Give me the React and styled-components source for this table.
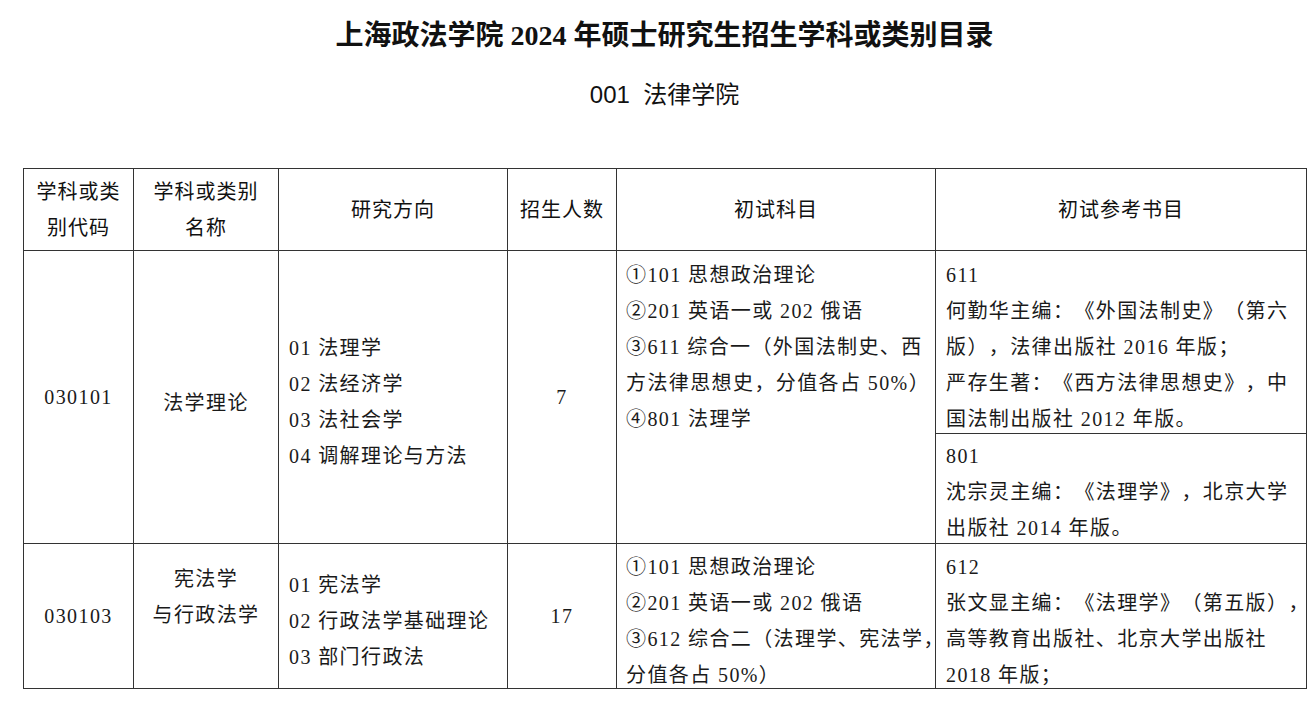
import React from 'react';
import styled, { createGlobalStyle } from 'styled-components';

const GlobalStyle = createGlobalStyle`
  html, body {
    margin: 0;
    padding: 0;
    background: #ffffff;
  }
  body {
    font-family: "Liberation Serif", "Noto Sans CJK SC", serif;
    color: #1a1a1a;
    text-spacing-trim: space-all;
  }
`;

const Page = styled.div`
  width: 1283px;
  padding-left: 23px;
`;

const Title = styled.h1`
  margin: 0;
  padding-top: 16px;
  line-height: 40px;
  text-align: center;
  font-family: "Liberation Serif", "Noto Sans CJK SC", serif;
  font-size: 28px;
  font-weight: 700;
  color: #111;
`;

const Subtitle = styled.h2`
  margin: 21px 0 0;
  line-height: 36px;
  text-align: center;
  font-family: "Liberation Sans", "Noto Sans CJK SC", sans-serif;
  font-size: 24px;
  font-weight: 400;
  color: #111;
`;

const Table = styled.table`
  margin-top: 55px;
  width: 1283px;
  border-collapse: collapse;
  table-layout: fixed;
`;

const Row = styled.tr`
  height: ${p => p.$h}px;
`;

const HeadCell = styled.th`
  border: 1px solid #333;
  padding: 0;
  text-align: center;
  vertical-align: middle;
  font-family: "Liberation Sans", "Noto Sans CJK SC", sans-serif;
  font-size: 20px;
  font-weight: 400;
  letter-spacing: 1px;
  line-height: 36px;
  color: #111;
`;

const Cell = styled.td`
  border: 1px solid #333;
  padding: ${p => p.$pad || '0'};
  text-align: ${p => (p.$left ? 'left' : 'center')};
  vertical-align: ${p => (p.$top ? 'top' : 'middle')};
  font-size: 20px;
  letter-spacing: 1.4px;
  line-height: 36px;
  color: #1a1a1a;
`;

/* fixed-height body so long lists may touch the border without growing the row */
const CellBody = styled.div`
  height: ${p => p.$h}px;
  overflow: visible;
`;

const Line = styled.div`
  white-space: nowrap;
`;

const Lines = ({ items }) => items.map((t, i) => <Line key={i}>{t}</Line>);

const cols = [110, 145, 229, 109, 319, 371];

export default function App() {
  return (
    <>
      <GlobalStyle />
      <Page>
        <Title>上海政法学院 2024 年硕士研究生招生学科或类别目录</Title>
        <Subtitle>001&nbsp;&nbsp;法律学院</Subtitle>
        <Table>
          <colgroup>
            {cols.map((w, i) => <col key={i} style={{ width: w }} />)}
          </colgroup>
          <thead>
            <Row $h={82}>
              <HeadCell><Lines items={['学科或类', '别代码']} /></HeadCell>
              <HeadCell><Lines items={['学科或类别', '名称']} /></HeadCell>
              <HeadCell>研究方向</HeadCell>
              <HeadCell>招生人数</HeadCell>
              <HeadCell>初试科目</HeadCell>
              <HeadCell>初试参考书目</HeadCell>
            </Row>
          </thead>
          <tbody>
            <Row $h={183}>
              <Cell rowSpan={2}>030101</Cell>
              <Cell rowSpan={2} $pad="12px 0 0">法学理论</Cell>
              <Cell rowSpan={2} $left $pad="9px 0 0 10px">
                <Lines items={['01 法理学', '02 法经济学', '03 法社会学', '04 调解理论与方法']} />
              </Cell>
              <Cell rowSpan={2}>7</Cell>
              <Cell rowSpan={2} $left $top $pad="6px 0 0 9px">
                <Lines
                  items={[
                    '①101 思想政治理论',
                    '②201 英语一或 202 俄语',
                    '③611 综合一（外国法制史、西',
                    '方法律思想史，分值各占 50%）',
                    '④801 法理学',
                  ]}
                />
              </Cell>
              <Cell $left $top $pad="6px 0 0 10px">
                <CellBody $h={170}>
                  <Lines
                    items={[
                      '611',
                      '何勤华主编：《外国法制史》（第六',
                      '版），法律出版社 2016 年版；',
                      '严存生著：《西方法律思想史》，中',
                      '国法制出版社 2012 年版。',
                    ]}
                  />
                </CellBody>
              </Cell>
            </Row>
            <Row $h={110}>
              <Cell $left $top $pad="4px 0 0 10px">
                <CellBody $h={100}>
                  <Lines items={['801', '沈宗灵主编：《法理学》，北京大学', '出版社 2014 年版。']} />
                </CellBody>
              </Cell>
            </Row>
            <Row $h={145}>
              <Cell>030103</Cell>
              <Cell $pad="0 0 38px">
                <Lines items={['宪法学', '与行政法学']} />
              </Cell>
              <Cell $left $pad="9px 0 0 10px">
                <Lines items={['01 宪法学', '02 行政法学基础理论', '03 部门行政法']} />
              </Cell>
              <Cell>17</Cell>
              <Cell $left $top $pad="5px 0 0 9px">
                <CellBody $h={130}>
                  <Lines
                    items={[
                      '①101 思想政治理论',
                      '②201 英语一或 202 俄语',
                      '③612 综合二（法理学、宪法学，',
                      '分值各占 50%）',
                    ]}
                  />
                </CellBody>
              </Cell>
              <Cell $left $top $pad="5px 0 0 10px">
                <CellBody $h={130}>
                  <Lines
                    items={[
                      '612',
                      '张文显主编：《法理学》（第五版），',
                      '高等教育出版社、北京大学出版社',
                      '2018 年版；',
                    ]}
                  />
                </CellBody>
              </Cell>
            </Row>
          </tbody>
        </Table>
      </Page>
    </>
  );
}
